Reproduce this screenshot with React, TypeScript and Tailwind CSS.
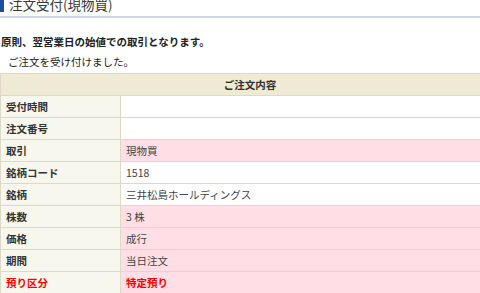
import React from "react";

interface RowProps {
  label: string;
  value: string;
  pink?: boolean;
  red?: boolean;
}

const rows: RowProps[] = [
  { label: "受付時間", value: "" },
  { label: "注文番号", value: "" },
  { label: "取引", value: "現物買", pink: true },
  { label: "銘柄コード", value: "1518" },
  { label: "銘柄", value: "三井松島ホールディングス" },
  { label: "株数", value: "3 株", pink: true },
  { label: "価格", value: "成行", pink: true },
  { label: "期間", value: "当日注文", pink: true },
  { label: "預り区分", value: "特定預り", pink: true, red: true },
];

export default function App() {
  return (
    <div
      className="w-[480px] h-[293px] overflow-hidden bg-white text-[#333]"
      style={{ fontFamily: '"Noto Sans CJK JP", "Liberation Sans", sans-serif' }}
    >
      <div className="h-[18px] border-b-2 border-[#c9d8ea] flex items-start overflow-hidden">
        <div className="w-[4px] h-[12px] bg-[#1d4f9c]" />
        <h1 className="ml-[5px] -mt-[5px] text-[13.5px] leading-[19px] text-[#3a3a3a]">
          注文受付(現物買)
        </h1>
      </div>

      <p className="mt-[17px] ml-[1px] text-[10.5px] leading-[14px] font-bold text-[#222]">
        原則、翌営業日の始値での取引となります。
      </p>
      <p className="mt-[6px] ml-[8px] text-[10.5px] leading-[14px] text-[#222]">
        ご注文を受け付けました。
      </p>

      <table className="mt-[4px] w-[500px] border-collapse text-[10.5px]">
        <thead>
          <tr className="h-[22px]">
            <th
              colSpan={2}
              className="border border-[#dcd9c8] bg-[#eeead4] font-bold text-[#333] text-center"
            >
              ご注文内容
            </th>
          </tr>
        </thead>
        <tbody>
          {rows.map((row) => (
            <tr key={row.label} className="h-[22px]">
              <td
                className={`w-[120px] border border-[#dcd9c8] bg-[#f8f7ee] pl-[5px] font-bold ${
                  row.red ? "text-[#ff0000]" : "text-[#333]"
                }`}
              >
                {row.label}
              </td>
              <td
                className={`border border-[#dcd9c8] pl-[5px] ${
                  row.pink ? "bg-[#ffdfe5]" : "bg-white"
                } ${row.red ? "text-[#ff0000] font-bold" : "text-[#444]"}`}
              >
                {row.value}
              </td>
            </tr>
          ))}
        </tbody>
      </table>
    </div>
  );
}
